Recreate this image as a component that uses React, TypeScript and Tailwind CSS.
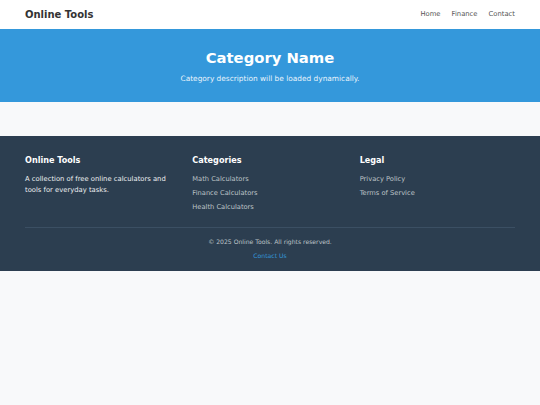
const font = "font-['DejaVu_Sans',sans-serif]";

export default function App() {
  return (
    <div className={`min-h-[405px] bg-[#f8f9fa] ${font}`}>
      <header className="bg-white h-[29px] shadow-[0_1px_2px_rgba(0,0,0,0.1)]">
        <div className="mx-[25px] h-full flex items-center justify-between">
          <div className="text-[10px] font-bold text-[#333]">Online Tools</div>
          <nav className="flex gap-[11px] text-[6.8px] text-[#555]">
            <a>Home</a>
            <a>Finance</a>
            <a>Contact</a>
          </nav>
        </div>
      </header>

      <section className="bg-[#3498db] h-[73px] flex flex-col items-center pt-[19px] text-white">
        <h1 className="text-[14.8px] font-bold leading-[19px]">Category Name</h1>
        <p className="mt-[6px] text-[7.4px] leading-[12px] text-[#eaf4fb]">
          Category description will be loaded dynamically.
        </p>
      </section>

      <div className="h-[34px]" />

      <footer className="bg-[#2c3e50] h-[135px] pt-[19px]">
        <div className="mx-[25px]">
          <div className="grid grid-cols-3 gap-[12px]">
            <div>
              <h3 className="text-[8.1px] font-bold text-white leading-[11px]">Online Tools</h3>
              <p className="mt-[8px] text-[6.8px] leading-[10.5px] text-[#ecf0f1] pr-[4px]">
                A collection of free online calculators and tools for everyday tasks.
              </p>
            </div>
            <div>
              <h3 className="text-[8.1px] font-bold text-white leading-[11px]">Categories</h3>
              <ul className="mt-[8px] flex flex-col gap-[3.5px] text-[6.7px] leading-[10.5px] text-[#bdc3c7]">
                <li>Math Calculators</li>
                <li>Finance Calculators</li>
                <li>Health Calculators</li>
              </ul>
            </div>
            <div>
              <h3 className="text-[8.1px] font-bold text-white leading-[11px]">Legal</h3>
              <ul className="mt-[8px] flex flex-col gap-[3.5px] text-[6.7px] leading-[10.5px] text-[#bdc3c7]">
                <li>Privacy Policy</li>
                <li>Terms of Service</li>
              </ul>
            </div>
          </div>
          <div className="mt-[14px] border-t border-[#3b4f63] pt-[9px] flex flex-col items-center text-[6.1px] leading-[10px]">
            <p className="text-[#bdc3c7]">© 2025 Online Tools. All rights reserved.</p>
            <a className="mt-[4px] text-[#3498db]">Contact Us</a>
          </div>
        </div>
      </footer>
    </div>
  );
}
